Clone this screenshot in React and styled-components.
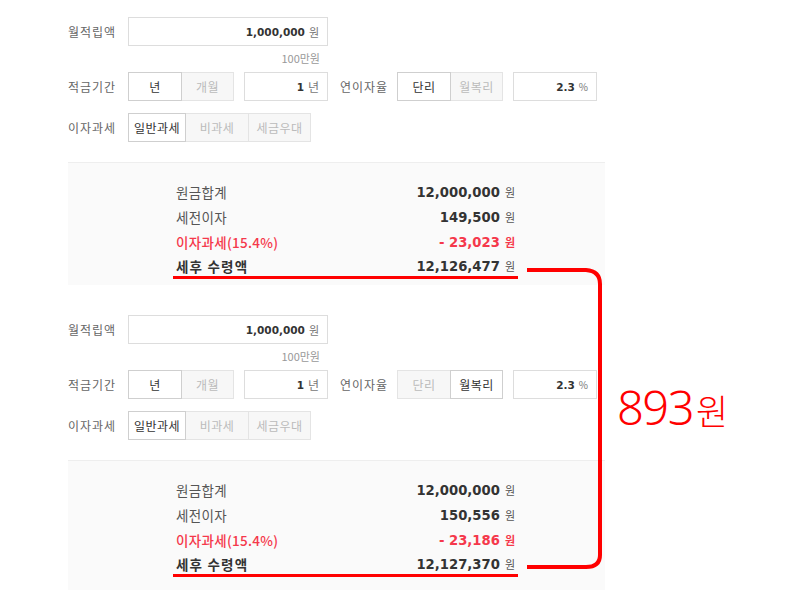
import React from "react";
import styled, { createGlobalStyle } from "styled-components";

const GlobalStyle = createGlobalStyle`
  body {
    margin: 0;
    background: #fff;
    font-family: "Noto Sans CJK KR", "Noto Sans", sans-serif;
  }
`;

const Page = styled.div`
  position: relative;
  width: 800px;
  height: 590px;
  overflow: hidden;
  display: flex;
  flex-direction: column;
  gap: 13px;
`;

const Section = styled.section`
  width: 537px;
  padding: 17px 0 0 68px;
`;

const Row = styled.div`
  display: flex;
  align-items: center;
  height: 29px;
  margin-top: ${(p) => p.$top || 0}px;
`;

const Label = styled.div`
  width: ${(p) => p.$w || 60}px;
  flex: none;
  font-size: 12px;
  color: #666;
  letter-spacing: 1px;
`;

const Field = styled.div`
  box-sizing: border-box;
  width: ${(p) => p.$w}px;
  height: 29px;
  margin-right: ${(p) => p.$gap || 0}px;
  display: flex;
  align-items: center;
  justify-content: flex-end;
  padding-right: 8px;
  border: 1px solid #ddd;
  background: #fff;
  gap: 4px;
`;

const Num = styled.span`
  font-family: "DejaVu Sans", sans-serif;
  font-weight: bold;
  font-size: 10.5px;
  color: #333;
`;

const Unit = styled.span`
  font-size: ${(p) => p.$size || 11}px;
  color: #777;
`;

const Hint = styled.div`
  width: 252px;
  text-align: right;
  font-size: 11px;
  color: #999;
  line-height: 24px;
  height: 26px;
`;

const Seg = styled.div`
  display: flex;
  margin-right: ${(p) => p.$gap || 0}px;
`;

const SegBtn = styled.div`
  box-sizing: border-box;
  width: ${(p) => p.$w}px;
  height: 29px;
  display: flex;
  align-items: center;
  justify-content: center;
  font-size: 12px;
  letter-spacing: 0.5px;
  border: 1px solid ${(p) => (p.$on ? "#cfcfcf" : "#e4e4e4")};
  margin-left: -1px;
  background: ${(p) => (p.$on ? "#fff" : "#f7f7f7")};
  color: ${(p) => (p.$on ? "#333" : "#bbb")};
  position: relative;
  z-index: ${(p) => (p.$on ? 1 : 0)};
  &:first-child {
    margin-left: 0;
  }
`;

const ResultBox = styled.div`
  margin-top: 20px;
  border-top: 1px solid #eee;
  background: #fafafa;
  padding: 16px 0 ${(p) => (p.$extend ? 30 : 6)}px 108px;
`;

const ResultRow = styled.div`
  width: ${(p) => (p.$total ? 345 : 339)}px;
  height: 25px;
  margin-left: ${(p) => (p.$total ? -3 : 0)}px;
  padding: ${(p) => (p.$total ? "2px 3px 0" : "0")};
  box-sizing: border-box;
  display: flex;
  align-items: center;
  justify-content: space-between;
  border-bottom: ${(p) => (p.$total ? "3px solid #ff0000" : "none")};
  color: ${(p) => (p.$red ? "#f5384b" : "#555")};
`;

const ResultLabel = styled.span`
  font-size: 13.5px;
  letter-spacing: ${(p) => (p.$bold ? 1.2 : 0.3)}px;
  font-weight: ${(p) => (p.$bold ? 700 : p.$red ? 500 : 400)};
  color: ${(p) => (p.$bold ? "#333" : "inherit")};
`;

const ResultValue = styled.span`
  display: flex;
  align-items: baseline;
  gap: 5px;
`;

const ResultNum = styled.span`
  font-family: "DejaVu Sans", sans-serif;
  font-weight: bold;
  font-size: 13.2px;
  color: ${(p) => (p.$red ? "#f5384b" : "#333")};
`;

const ResultUnit = styled.span`
  font-size: 11px;
  color: ${(p) => (p.$red ? "#f5384b" : "#555")};
  font-weight: ${(p) => (p.$red ? 700 : 400)};
`;

const Bracket = styled.svg`
  position: absolute;
  left: 0;
  top: 0;
  pointer-events: none;
`;

const Diff = styled.div`
  position: absolute;
  left: 617px;
  top: 384px;
  display: flex;
  align-items: baseline;
  color: #ff0000;
  font-weight: 300;
  line-height: 1;
`;

const DiffNum = styled.span`
  font-family: "Noto Sans", sans-serif;
  font-size: 47px;
  letter-spacing: -1.5px;
`;

const DiffUnit = styled.span`
  font-size: 35px;
  margin-left: 3px;
`;

function Calculator({ compound, interest, tax, total, extend }) {
  return (
    <Section>
      <Row>
        <Label>월적립액</Label>
        <Field $w={200}>
          <Num>1,000,000</Num>
          <Unit>원</Unit>
        </Field>
      </Row>
      <Hint>100만원</Hint>
      <Row>
        <Label>적금기간</Label>
        <Seg $gap={10}>
          <SegBtn $w={54} $on>년</SegBtn>
          <SegBtn $w={53}>개월</SegBtn>
        </Seg>
        <Field $w={84} $gap={12}>
          <Num>1</Num>
          <Unit $size={12}>년</Unit>
        </Field>
        <Label $w={57}>연이자율</Label>
        <Seg $gap={10}>
          <SegBtn $w={54} $on={!compound}>단리</SegBtn>
          <SegBtn $w={53} $on={compound}>월복리</SegBtn>
        </Seg>
        <Field $w={84}>
          <Num>2.3</Num>
          <Unit $size={10}>%</Unit>
        </Field>
      </Row>
      <Row $top={12}>
        <Label>이자과세</Label>
        <Seg>
          <SegBtn $w={58} $on>일반과세</SegBtn>
          <SegBtn $w={64}>비과세</SegBtn>
          <SegBtn $w={63}>세금우대</SegBtn>
        </Seg>
      </Row>
      <ResultBox $extend={extend}>
        <ResultRow>
          <ResultLabel>원금합계</ResultLabel>
          <ResultValue>
            <ResultNum>12,000,000</ResultNum>
            <ResultUnit>원</ResultUnit>
          </ResultValue>
        </ResultRow>
        <ResultRow>
          <ResultLabel>세전이자</ResultLabel>
          <ResultValue>
            <ResultNum>{interest}</ResultNum>
            <ResultUnit>원</ResultUnit>
          </ResultValue>
        </ResultRow>
        <ResultRow $red>
          <ResultLabel $red>이자과세(15.4%)</ResultLabel>
          <ResultValue>
            <ResultNum $red>- {tax}</ResultNum>
            <ResultUnit $red>원</ResultUnit>
          </ResultValue>
        </ResultRow>
        <ResultRow $total>
          <ResultLabel $bold>세후 수령액</ResultLabel>
          <ResultValue>
            <ResultNum>{total}</ResultNum>
            <ResultUnit>원</ResultUnit>
          </ResultValue>
        </ResultRow>
      </ResultBox>
    </Section>
  );
}

export default function App() {
  return (
    <>
      <GlobalStyle />
      <Page>
        <Calculator interest="149,500" tax="23,023" total="12,126,477" />
        <Calculator
          compound
          extend
          interest="150,556"
          tax="23,186"
          total="12,127,370"
        />
        <Bracket width="800" height="590" viewBox="0 0 800 590">
          <path
            d="M527 270 H586 Q600 271 600 284 V555 Q600 567 586 567 H527"
            fill="none"
            stroke="#ff0000"
            strokeWidth="4"
          />
        </Bracket>
        <Diff>
          <DiffNum>893</DiffNum>
          <DiffUnit>원</DiffUnit>
        </Diff>
      </Page>
    </>
  );
}
